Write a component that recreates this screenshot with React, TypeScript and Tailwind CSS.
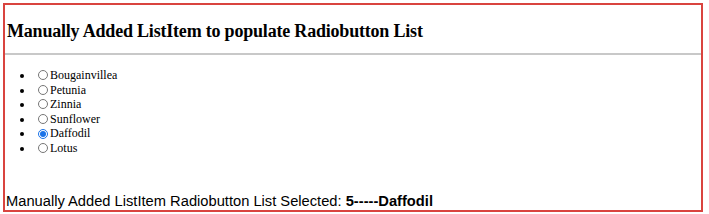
import { useState } from "react";

const flowers = ["Bougainvillea", "Petunia", "Zinnia", "Sunflower", "Daffodil", "Lotus"];

export default function App() {
  const [selected, setSelected] = useState(4);

  return (
    <div className="w-[709px] h-[214px] bg-white pl-[3px] pt-[3px]">
      <div className="w-[700px] h-[209px] border-2 border-[#d9443f] flex flex-col">
        <h3 className="h-[48px] pl-[2px] pt-[15px] text-[18px] leading-[22px] font-bold text-black font-['Liberation_Serif',serif] tracking-[-0.2px]">
          Manually Added ListItem to populate Radiobutton List
        </h3>
        <div className="h-[2px] bg-[#c8c8c8]" />
        <ul className="list-disc pl-[29px] pt-[13px] font-['Liberation_Serif',serif] text-[12px] text-black">
          {flowers.map((f, i) => (
            <li key={f} className="pl-[4px] h-[14.6px] leading-[14.6px]">
              <label className="inline-flex items-center h-full align-top">
                <input
                  type="radio"
                  name="flowers"
                  checked={selected === i}
                  onChange={() => setSelected(i)}
                  className="w-[10px] h-[10px] m-0 mr-[2px] accent-[#1a73e8]"
                />
                {f}
              </label>
            </li>
          ))}
        </ul>
        <p className="mt-auto pl-[1px] text-[14.7px] leading-[17px] text-black font-['Liberation_Sans',sans-serif]">
          Manually Added ListItem Radiobutton List Selected:{" "}
          <b>
            {selected + 1}-----{flowers[selected]}
          </b>
        </p>
      </div>
    </div>
  );
}
